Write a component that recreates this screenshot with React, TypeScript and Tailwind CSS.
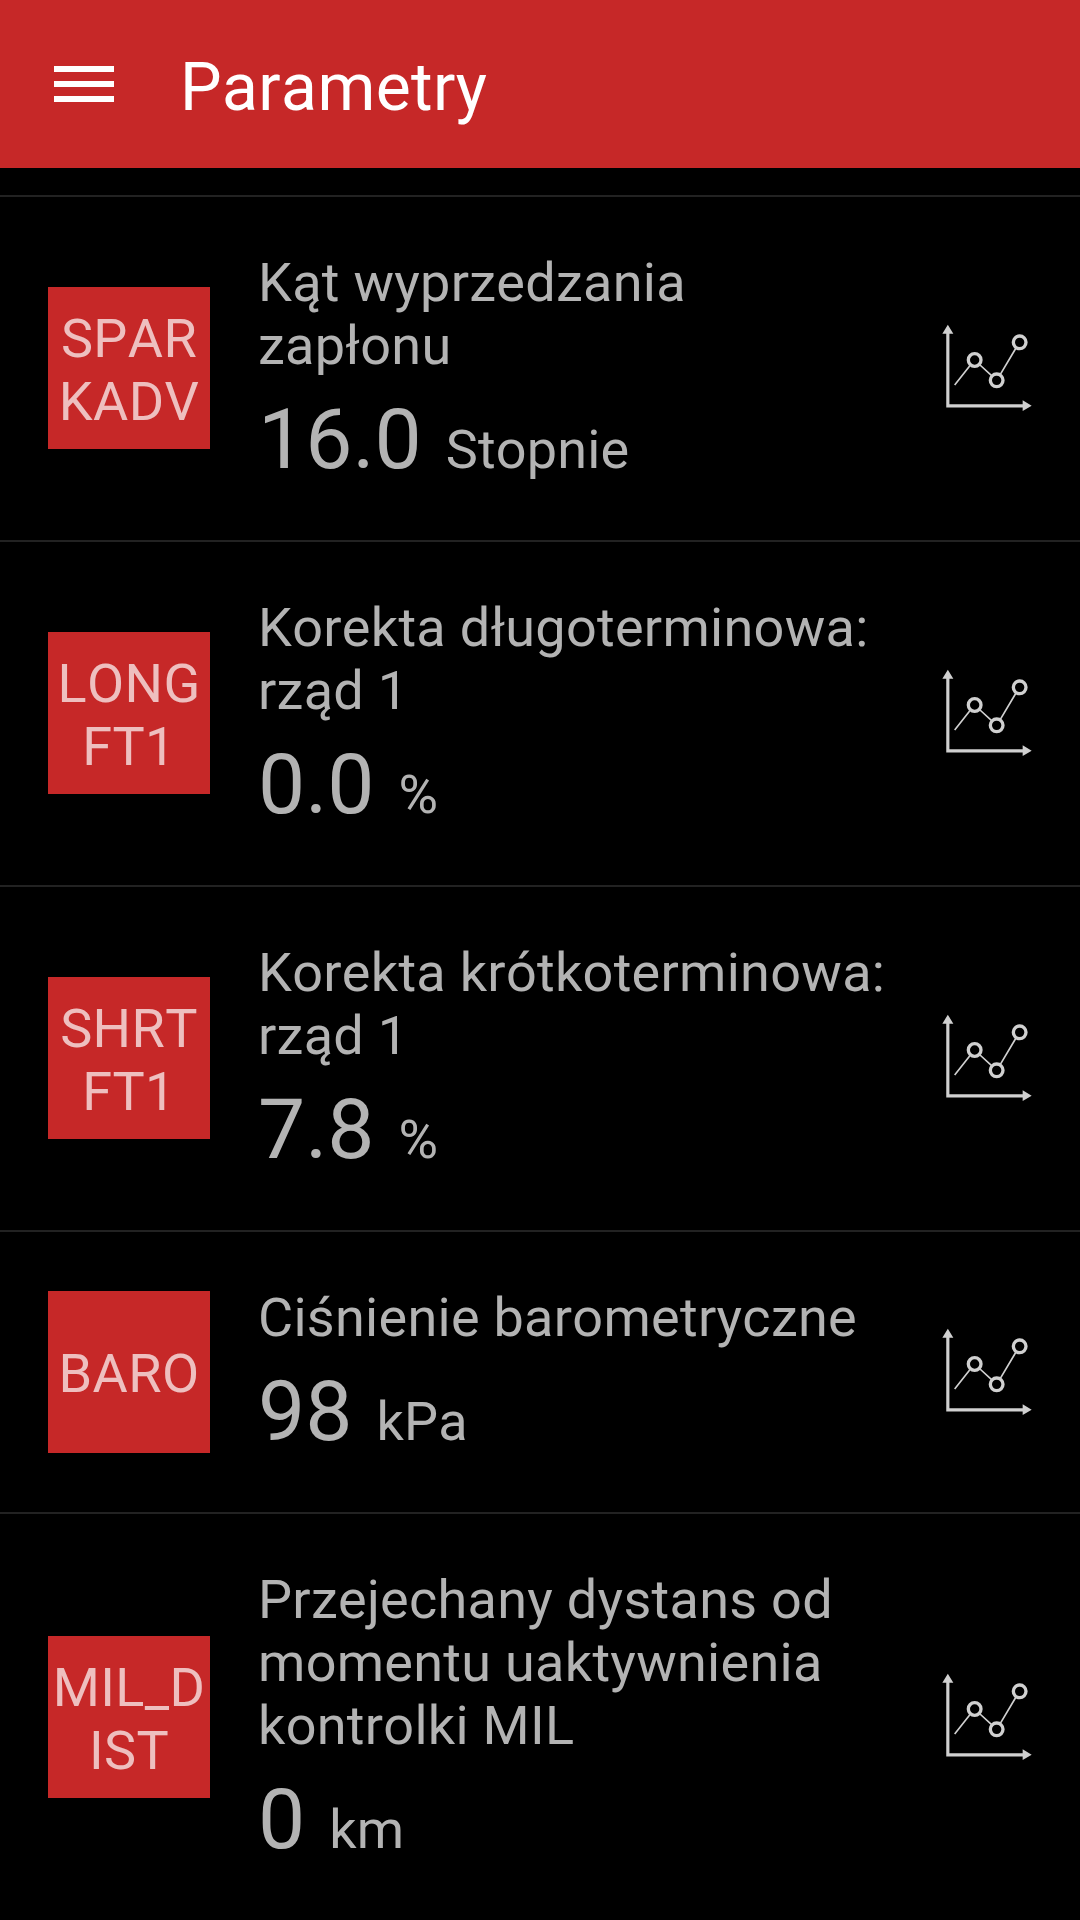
interface Parameter {
  code: string;
  name: string;
  value: string;
  unit: string;
}

const PARAMETERS: Parameter[] = [
  { code: 'SPAR\nKADV', name: 'Kąt wyprzedzania\nzapłonu', value: '16.0', unit: 'Stopnie' },
  { code: 'LONG\nFT1', name: 'Korekta długoterminowa:\nrząd 1', value: '0.0', unit: '%' },
  { code: 'SHRT\nFT1', name: 'Korekta krótkoterminowa:\nrząd 1', value: '7.8', unit: '%' },
  { code: 'BARO', name: 'Ciśnienie barometryczne', value: '98', unit: 'kPa' },
  {
    code: 'MIL_D\nIST',
    name: 'Przejechany dystans od\nmomentu uaktywnienia\nkontrolki MIL',
    value: '0',
    unit: 'km',
  },
];

function ChartIcon() {
  return (
    <svg viewBox="0 0 390 360" className="h-[120px] w-[130px]" fill="none" stroke="#d0d0d0">
      <path d="M83.5 66V287.5H312" strokeWidth="9.5" />
      <path d="M83.5 44L100 71H67ZM335 287L308 303V271Z" fill="#d0d0d0" stroke="none" />
      <path d="M104 225L149 168M180 165L214 196M241 193L288 114" strokeWidth="5" />
      <g strokeWidth="10">
        <circle cx="164" cy="150" r="19" />
        <circle cx="230" cy="211" r="19" />
        <circle cx="299" cy="97" r="19" />
      </g>
    </svg>
  );
}

function ParameterRow({ code, name, value, unit }: Parameter) {
  return (
    <li className="flex items-center border-t-2 border-[#222222] pl-12 pr-[30px]">
      <div className="-mt-px flex size-[162px] shrink-0 items-center justify-center bg-[#c62828] pt-1 text-center tracking-[0.4px] whitespace-pre text-white/70">
        {code}
      </div>
      <div className="ml-12 flex-1 pt-[54px] pb-[41px]">
        <div className="tracking-[0.28px] whitespace-pre">{name}</div>
        <div className="mt-[13px] flex items-baseline leading-[99px]">
          <span className="text-[84px]">{value}</span>
          <span className="ml-6 tracking-[0.15px]">{unit}</span>
        </div>
      </div>
      <button type="button" aria-label="Wykres" className="mt-[3px] shrink-0">
        <ChartIcon />
      </button>
    </li>
  );
}

export default function App() {
  return (
    <div className="h-[1920px] w-[1080px] overflow-hidden bg-black font-[Roboto,sans-serif] text-[54px] leading-[63px] text-[#b3b3b3] [font-kerning:none]">
      <header className="flex h-[168px] items-center bg-[#c62828] pl-[54px] text-white">
        <button type="button" aria-label="Menu" className="flex w-[60px] flex-col gap-[9px]">
          <span className="h-1.5 bg-white" />
          <span className="h-1.5 bg-white" />
          <span className="h-1.5 bg-white" />
        </button>
        <h1 className="ml-[66px] pt-[7px] text-[66px] leading-[78px] tracking-[0.4px]">Parametry</h1>
      </header>
      <ul className="pt-[27px]">
        {PARAMETERS.map((p) => (
          <ParameterRow key={p.code} {...p} />
        ))}
      </ul>
    </div>
  );
}
